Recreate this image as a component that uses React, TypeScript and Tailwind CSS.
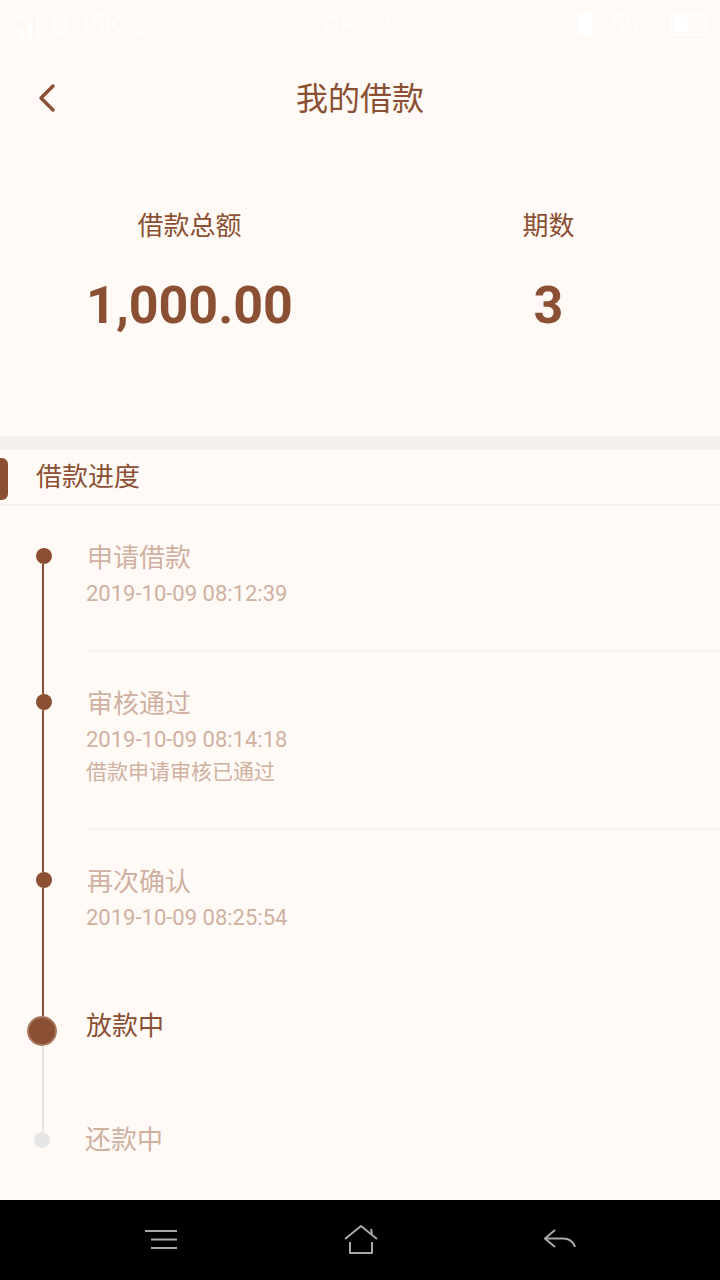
function StatusBar() {
  return (
    <div className="h-[50px] flex items-center justify-between pl-[10px] pr-[12px] text-white text-[28px] relative">
      <div className="flex items-center gap-[8px]">
        <div className="relative w-[34px] h-[30px]">
          <svg width="34" height="30" viewBox="0 0 34 30" fill="white">
            <rect x="1" y="25" width="4" height="4" />
            <rect x="10" y="19" width="4" height="10" />
            <rect x="18" y="13" width="4" height="16" />
            <rect x="26" y="2" width="3" height="27" />
          </svg>
          <span className="absolute left-0 top-0 text-[12px] leading-[14px] font-bold">4G</span>
        </div>
        <span className="font-light">0.05K/s</span>
      </div>
      <span className="absolute left-[324px] top-[6px] font-light">08:27</span>
      <div className="flex items-center font-light">
        <svg className="mr-[13px]" width="22" height="26" viewBox="0 0 22 26" fill="white">
          <rect x="4" y="0" width="14" height="24" rx="1" />
          <rect x="1" y="2" width="1" height="6" />
          <rect x="19" y="17" width="1" height="7" />
          <rect x="21" y="17" width="1" height="7" />
        </svg>
        <span className="mr-[9px]">59%</span>
        <svg width="38" height="24" viewBox="0 0 38 24" fill="none">
          <rect x="1" y="1" width="33" height="21" stroke="white" strokeWidth="2" />
          <rect x="4" y="4" width="15" height="15" fill="white" />
          <rect x="36" y="8" width="2" height="8" fill="white" />
        </svg>
      </div>
    </div>
  );
}

function Header() {
  return (
    <div className="h-[96px] flex items-center relative">
      <svg className="ml-[38px]" width="18" height="28" viewBox="0 0 18 28" fill="none">
        <path d="M15 2 L3 14 L15 26" stroke="#8b5033" strokeWidth="3.4" strokeLinecap="round" strokeLinejoin="round" />
      </svg>
      <div className="absolute inset-0 pt-[2px] flex items-center justify-center text-[32px] leading-none text-[#8b5033]">我的借款</div>
    </div>
  );
}

function Summary() {
  const items = [
    { label: "借款总额", value: "1,000.00" },
    { label: "期数", value: "3" },
  ];
  return (
    <div className="grid grid-cols-[359px_359px] pl-[10px] pt-[59px] h-[304px] border-b-[14px] border-[#f5f0ed] box-border">
      {items.map((item) => (
        <div key={item.label} className="flex flex-col items-center text-[#8b5033]">
          <div className="text-[26px] h-[42px] leading-[42px]">{item.label}</div>
          <div className="text-[52px] font-bold h-[60px] leading-[60px] mt-[29px]">{item.value}</div>
        </div>
      ))}
    </div>
  );
}

type Step = {
  title: string;
  time: string;
  note?: string;
  height: string;
};

const doneSteps: Step[] = [
  { title: "申请借款", time: "2019-10-09 08:12:39", height: "h-[146px]" },
  { title: "审核通过", time: "2019-10-09 08:14:18", note: "借款申请审核已通过", height: "h-[178px]" },
  { title: "再次确认", time: "2019-10-09 08:25:54", height: "h-[146px]" },
];

function DoneRow({ step, first, last }: { step: Step; first: boolean; last: boolean }) {
  return (
    <div className={`flex ${step.height}`}>
      <div className="w-[86px] shrink-0 flex flex-col">
        <div className={`w-[2px] h-[42px] ml-[42px] shrink-0 ${first ? "" : "bg-[#8b5033]"}`} />
        <div className="w-4 h-4 rounded-full bg-[#8b5033] ml-[36px] shrink-0" />
        <div className="w-[2px] flex-1 bg-[#8b5033] ml-[42px]" />
      </div>
      <div className={`flex-1 pt-[34px] ${last ? "" : "border-b-2 border-[#f5f1ee]"}`}>
        <div className="text-[26px] leading-[36px] text-[#cfb1a1] pl-[1px]">{step.title}</div>
        <div className="text-[22px] leading-[30px] mt-[3px] text-[#cfb1a1]">{step.time}</div>
        {step.note && <div className="text-[21px] leading-[30px] mt-[2px] text-[#cfb1a1]">{step.note}</div>}
      </div>
    </div>
  );
}

function Timeline() {
  return (
    <div className="flex-1">
      {doneSteps.map((step, i) => (
        <DoneRow key={step.title} step={step} first={i === 0} last={i === doneSteps.length - 1} />
      ))}
      {/* current step */}
      <div className="flex h-[108px]">
        <div className="w-[86px] shrink-0 flex flex-col">
          <div className="w-[2px] h-[40px] bg-[#8b5033] ml-[42px]" />
          <div className="w-[30px] h-[30px] rounded-full bg-[#8b5033] border-2 border-[#a87860] ml-[27px] shrink-0" />
          <div className="w-[2px] flex-1 bg-[#e6e6e6] ml-[42px]" />
        </div>
        <div className="text-[26px] leading-[36px] pt-[32px] text-[#8b5033]">放款中</div>
      </div>
      <div className="flex h-[116px]">
        <div className="w-[85px] shrink-0 flex flex-col">
          <div className="w-[2px] h-[48px] bg-[#e6e6e6] ml-[42px]" />
          <div className="w-4 h-4 rounded-full bg-[#e6e6e6] ml-[34px]" />
        </div>
        <div className="text-[26px] leading-[36px] pt-[38px] text-[#cfb1a1]">还款中</div>
      </div>
    </div>
  );
}

function NavBar() {
  return (
    <div className="h-[80px] bg-black flex items-center justify-between pl-[145px] pr-[144px]">
      <svg width="32" height="22" viewBox="0 0 32 22" fill="none" stroke="#a8a8a8" strokeWidth="2">
        <path d="M0 2 H32 M6 10.500 H32 M6 19 H32" />
      </svg>
      <svg width="34" height="30" viewBox="0 0 34 30" fill="none" stroke="#a8a8a8" strokeWidth="2" strokeLinejoin="round">
        <path d="M1 14 L17 1 L33 14" />
        <path d="M27 4 L28 9" />
        <path d="M6 17 V28 H28 V17" />
      </svg>
      <svg width="32" height="22" viewBox="0 0 32 22" fill="none" stroke="#a8a8a8" strokeWidth="2">
        <path d="M11 1 L1 9.500 L11 18" />
        <path d="M1 9.500 H19 C25 9.500 29 12 31 18" />
      </svg>
    </div>
  );
}

export default function App() {
  return (
    <div
      className="w-[720px] h-[1280px] flex flex-col bg-[#fffaf6] overflow-hidden"
      style={{ fontFamily: 'Roboto, "Noto Sans CJK SC", sans-serif' }}
    >
      <StatusBar />
      <Header />
      <Summary />
      <div className="h-[56px] flex items-center border-b-2 border-[#f5f1ee] box-border">
        <div className="w-2 h-[42px] mt-[3px] bg-[#8b5033] rounded-r-[6px]" />
        <div className="ml-[28px] text-[26px] text-[#8b5033]">借款进度</div>
      </div>
      <Timeline />
      <NavBar />
    </div>
  );
}
